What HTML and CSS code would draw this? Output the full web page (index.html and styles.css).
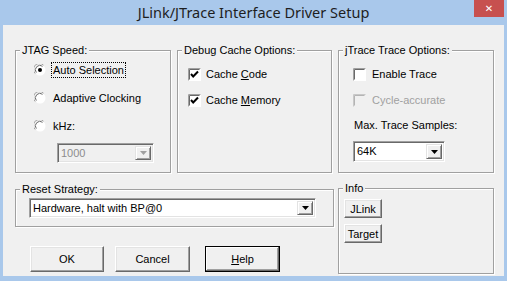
FILE: index.html
```html
<!DOCTYPE html>
<html lang="en">
<head>
  <meta charset="UTF-8" />
  <title>JLink/JTrace Interface Driver Setup</title>
  <link rel="stylesheet" href="styles.css">
</head>
<body>
  <div class="window">
    <div class="titlebar">
      <span class="spacer"></span>
      <span class="title">JLink/JTrace Interface Driver Setup</span>
      <button class="close">&#x2715;</button>
    </div>

    <div class="client">
      <div class="group jtag">
        <span class="legend">JTAG Speed:</span>
        <div class="option">
          <svg class="radio" width="12" height="12" viewBox="0 0 12 12">
            <circle cx="6" cy="6" r="5.5" fill="#fff"/>
            <path d="M1.2 9.5 A5.5 5.5 0 0 1 9.5 1.2" fill="none" stroke="#a0a0a0"/>
            <path d="M2.3 8.6 A4.5 4.5 0 0 1 8.6 2.3" fill="none" stroke="#696969"/>
            <circle cx="6" cy="6" r="2" fill="#000"/>
          </svg>
          <span class="label focus">Auto Selection</span>
        </div>
        <div class="option">
          <svg class="radio" width="12" height="12" viewBox="0 0 12 12">
            <circle cx="6" cy="6" r="5.5" fill="#fff"/>
            <path d="M1.2 9.5 A5.5 5.5 0 0 1 9.5 1.2" fill="none" stroke="#a0a0a0"/>
            <path d="M2.3 8.6 A4.5 4.5 0 0 1 8.6 2.3" fill="none" stroke="#696969"/>
          </svg>
          <span class="label">Adaptive Clocking</span>
        </div>
        <div class="option">
          <svg class="radio" width="12" height="12" viewBox="0 0 12 12">
            <circle cx="6" cy="6" r="5.5" fill="#fff"/>
            <path d="M1.2 9.5 A5.5 5.5 0 0 1 9.5 1.2" fill="none" stroke="#a0a0a0"/>
            <path d="M2.3 8.6 A4.5 4.5 0 0 1 8.6 2.3" fill="none" stroke="#696969"/>
          </svg>
          <span class="label">kHz:</span>
        </div>
        <div class="combo disabled khz">
          <span class="value">1000</span>
          <span class="arrow"><svg width="7" height="4" viewBox="0 0 7 4"><polygon points="0,0 7,0 3.5,4" fill="#a0a0a0"/></svg></span>
        </div>
      </div>

      <div class="group cache">
        <span class="legend">Debug Cache Options:</span>
        <div class="option">
          <svg class="check" width="13" height="13" viewBox="0 0 13 13">
            <rect x="0" y="0" width="13" height="13" fill="#fff"/>
            <path d="M0.5 12.5 V0.5 H12.5" fill="none" stroke="#a0a0a0"/>
            <path d="M1.5 11.5 V1.5 H11.5" fill="none" stroke="#696969"/>
            <path d="M3 6 L5.2 8.5 L10 3.5" fill="none" stroke="#000" stroke-width="2"/>
          </svg>
          <span class="label">Cache <u>C</u>ode</span>
        </div>
        <div class="option">
          <svg class="check" width="13" height="13" viewBox="0 0 13 13">
            <rect x="0" y="0" width="13" height="13" fill="#fff"/>
            <path d="M0.5 12.5 V0.5 H12.5" fill="none" stroke="#a0a0a0"/>
            <path d="M1.5 11.5 V1.5 H11.5" fill="none" stroke="#696969"/>
            <path d="M3 6 L5.2 8.5 L10 3.5" fill="none" stroke="#000" stroke-width="2"/>
          </svg>
          <span class="label">Cache <u>M</u>emory</span>
        </div>
      </div>

      <div class="group trace">
        <span class="legend">jTrace Trace Options:</span>
        <div class="option">
          <svg class="check" width="13" height="13" viewBox="0 0 13 13">
            <rect x="0" y="0" width="13" height="13" fill="#fff"/>
            <path d="M0.5 12.5 V0.5 H12.5" fill="none" stroke="#a0a0a0"/>
            <path d="M1.5 11.5 V1.5 H11.5" fill="none" stroke="#696969"/>
          </svg>
          <span class="label">Enable Trace</span>
        </div>
        <div class="option">
          <svg class="check" width="13" height="13" viewBox="0 0 13 13">
            <rect x="0" y="0" width="13" height="13" fill="#f0f0f0"/>
            <path d="M0.5 12.5 V0.5 H12.5" fill="none" stroke="#c8c8c8"/>
            <path d="M1.5 11.5 V1.5 H11.5" fill="none" stroke="#b4b4b4"/>
          </svg>
          <span class="label muted">Cycle-accurate</span>
        </div>
        <div class="caption">Max. Trace Samples:</div>
        <div class="combo samples">
          <span class="value">64K</span>
          <span class="arrow"><svg width="7" height="4" viewBox="0 0 7 4"><polygon points="0,0 7,0 3.5,4" fill="#000"/></svg></span>
        </div>
      </div>

      <div class="group reset">
        <span class="legend">Reset Strategy:</span>
        <div class="combo strategy">
          <span class="value">Hardware, halt with BP@0</span>
          <span class="arrow"><svg width="7" height="4" viewBox="0 0 7 4"><polygon points="0,0 7,0 3.5,4" fill="#000"/></svg></span>
        </div>
      </div>

      <div class="group info">
        <span class="legend">Info</span>
        <button class="btn small">JLink</button>
        <button class="btn small">Target</button>
      </div>

      <div class="actions">
        <button class="btn">OK</button>
        <button class="btn">Cancel</button>
        <button class="btn default"><u>H</u>elp</button>
      </div>
    </div>
  </div>
</body>
</html>
```

FILE: styles.css
```css
* {
  box-sizing: border-box;
}

body {
  margin: 0;
  background: #a9c8eb;
  font-family: 'Liberation Sans', Arial, sans-serif;
  font-size: 11px;
  color: #000;
}

.window {
  width: 507px;
  height: 281px;
  display: flex;
  flex-direction: column;
}

.titlebar {
  height: 25px;
  display: flex;
  align-items: flex-start;
  padding: 0 3px;
}

.spacer {
  width: 30px;
}

.title {
  flex: 1;
  text-align: center;
  font-family: 'Noto Sans', sans-serif;
  font-size: 14.5px;
  line-height: 24px;
  color: #1e1e1e;
}

.close {
  width: 30px;
  height: 17px;
  border: none;
  padding: 0;
  background: #c7504f;
  color: #fff;
  font-size: 10px;
  font-weight: bold;
  line-height: 17px;
  font-family: 'DejaVu Sans', sans-serif;
}

.client {
  flex: 1;
  margin: 0 3px 5px;
  background: #f0f0f0;
  padding: 25px 0 0 12px;
  display: grid;
  grid-template-columns: 156px 155px 156px;
  grid-template-rows: 123px 38px auto;
  column-gap: 6px;
  row-gap: 16px;
  align-content: start;
}

.group {
  position: relative;
  border: 1px solid #a0a0a0;
  box-shadow: inset 1px 1px 0 #fff, 1px 1px 0 #fff;
}

.legend {
  position: absolute;
  top: -7px;
  left: 4px;
  padding: 0 2px;
  background: #f0f0f0;
  line-height: 13px;
  white-space: nowrap;
}

.option {
  display: flex;
  align-items: center;
  height: 16px;
  white-space: nowrap;
}

.label {
  padding: 0 1px;
  line-height: 14px;
}

.label.focus {
  outline: 1px dotted #000;
}

.muted {
  color: #a0a0a0;
}

/* JTAG speed */
.jtag {
  padding: 11px 0 0 18px;
  display: flex;
  flex-direction: column;
  gap: 12px;
}

.jtag .radio {
  margin-right: 6px;
}

.jtag .combo {
  margin: -3px 0 0 23px;
}

/* check boxes */
.cache,
.trace {
  padding-top: 15px;
  display: flex;
  flex-direction: column;
  gap: 10px;
}

.cache {
  padding-left: 10px;
}

.trace {
  padding-left: 14px;
}

.check {
  margin-right: 4px;
}

.trace .check {
  margin-right: 5px;
}

.caption {
  margin-top: 1px;
  line-height: 13px;
  padding-left: 1px;
}

.trace .combo {
  margin-top: -1px;
}

/* combo boxes */
.combo {
  display: flex;
  align-items: stretch;
  height: 20px;
  background: #fff;
  border: 1px solid;
  border-color: #a0a0a0 #fff #fff #a0a0a0;
  box-shadow: inset 1px 1px 0 #696969, inset -1px -1px 0 #e3e3e3;
  padding: 2px;
}

.combo .value {
  flex: 1;
  padding-left: 1px;
  line-height: 14px;
}

.combo .arrow {
  width: 16px;
  display: flex;
  align-items: center;
  justify-content: center;
  background: #f0f0f0;
  border: 1px solid;
  border-color: #e3e3e3 #696969 #696969 #e3e3e3;
  box-shadow: inset 1px 1px 0 #fff, inset -1px -1px 0 #a0a0a0;
}

.combo.disabled {
  background: #f0f0f0;
}

.combo.disabled .value {
  color: #8d8d8d;
}

.khz {
  width: 97px;
}

.samples {
  width: 92px;
  height: 21px;
}

.strategy {
  width: 287px;
  margin: 8px 0 0 13px;
}

/* second row */
.reset {
  grid-column: 1 / 3;
  margin-right: -2px;
}

.info {
  grid-column: 3;
  grid-row: 2 / 4;
  height: 86px;
  margin-top: -1px;
  padding: 10px 0 0 5px;
  display: flex;
  flex-direction: column;
  align-items: flex-start;
  gap: 6px;
}

/* buttons */
.btn {
  font-family: inherit;
  font-size: 11px;
  color: #000;
  background: #f0f0f0;
  border: 1px solid;
  border-color: #fff #696969 #696969 #fff;
  box-shadow: inset -1px -1px 0 #a0a0a0, inset 1px 1px 0 #e3e3e3;
  padding: 0;
  width: 75px;
  height: 26px;
}

.btn.small {
  width: 38px;
  height: 19px;
}

.btn.default {
  border: 1px solid #000;
  box-shadow: inset -1px -1px 0 #696969, inset 1px 1px 0 #fff, inset -2px -2px 0 #a0a0a0;
}

.actions {
  grid-column: 1 / 3;
  margin-top: 3px;
  padding-left: 15px;
  display: flex;
  gap: 11px;
}

.actions .btn:first-child {
  width: 74px;
}

.actions .default {
  margin-left: 4px;
}
```
